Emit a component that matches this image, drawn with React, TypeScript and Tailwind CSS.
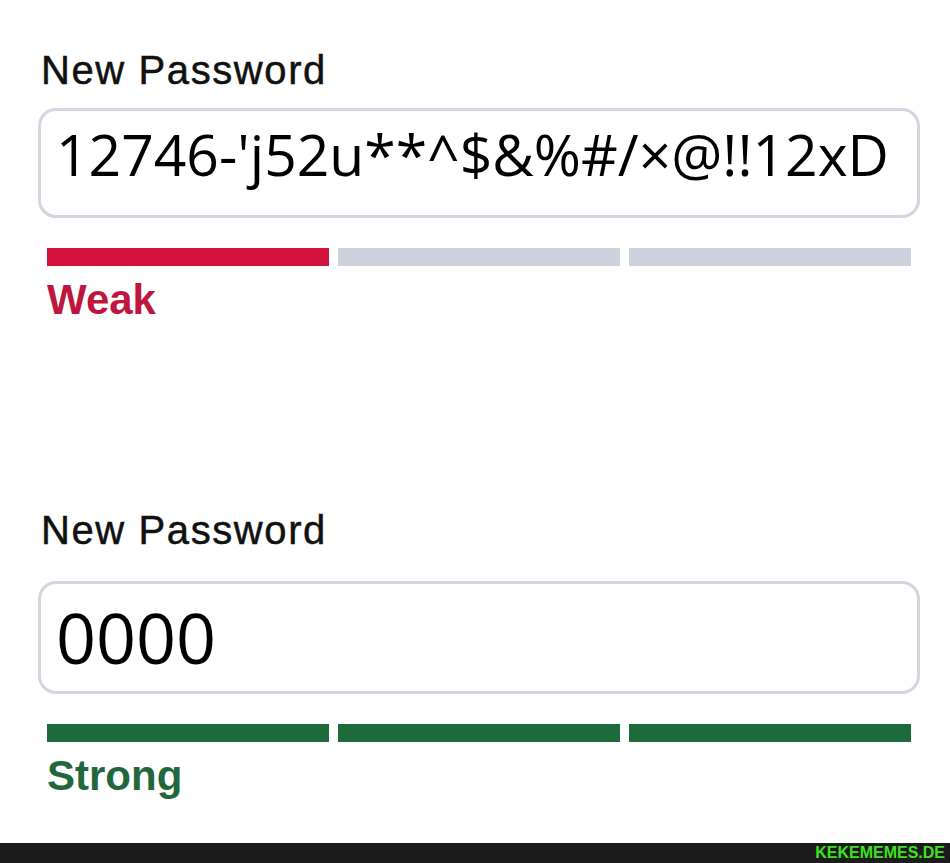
import React from "react";

type Level = "weak" | "strong";

const labelFont = { fontFamily: '"Liberation Sans", Arial, sans-serif' };
const valueFont = { fontFamily: '"Open Sans", "Noto Sans", sans-serif' };

function Meter({ level }: { level: Level }) {
  const filled = level === "weak" ? 1 : 3;
  const on = level === "weak" ? "bg-[#d0123c]" : "bg-[#1d6a3b]";
  return (
    <div className="ml-[9px] grid w-[864px] grid-cols-3 gap-[9px]">
      {[0, 1, 2].map((i) => (
        <div key={i} className={`h-[18px] ${i < filled ? on : "bg-[#cdd3de]"}`} />
      ))}
    </div>
  );
}

function PasswordField({
  value,
  level,
  big,
}: {
  value: string;
  level: Level;
  big?: boolean;
}) {
  return (
    <div className="flex flex-col">
      <div
        className="ml-[3px] text-[40px] leading-none tracking-[1.6px] text-[#111111] [-webkit-text-stroke:0.5px_#111111]"
        style={labelFont}
      >
        New Password
      </div>
      <div
        className={`${big ? "mt-[31px] h-[113px] pt-[18px] text-[70px]" : "mt-[18px] h-[110px] pt-[15px] text-[57px]"} w-[882px] rounded-[18px] border-[3px] border-[#d5d5e0] bg-white pl-[15px] leading-none text-black`}
        style={valueFont}
      >
        {value}
      </div>
      <div className="mt-[30px]">
        <Meter level={level} />
      </div>
      <div
        className={`ml-[9px] mt-[13px] text-[42px] font-bold leading-none ${level === "weak" ? "text-[#bd1740]" : "text-[#22673b]"}`}
        style={labelFont}
      >
        {level === "weak" ? "Weak" : "Strong"}
      </div>
    </div>
  );
}

export default function App() {
  return (
    <div className="flex h-[863px] w-[950px] flex-col bg-white">
      <div className="flex-1 pl-[38px] pt-[50px]">
        <PasswordField value={"12746-'j52u**^$&%#/×@!!12xD"} level="weak" />
        <div className="h-[189px]" />
        <PasswordField value="0000" level="strong" big />
      </div>
      <div className="flex h-[20px] items-center justify-end bg-[#1b1b1b] pr-[5px]">
        <span
          className="text-[16px] font-bold leading-none text-[#3fe021]"
          style={labelFont}
        >
          KEKEMEMES.DE
        </span>
      </div>
    </div>
  );
}
